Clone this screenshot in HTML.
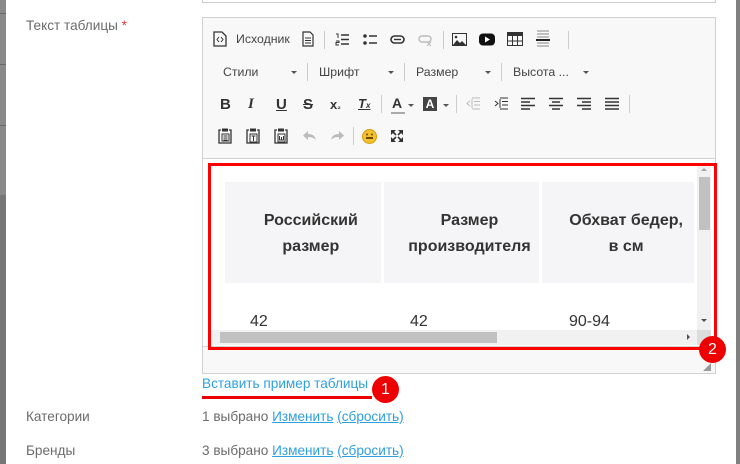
<!DOCTYPE html>
<html><head><meta charset="utf-8"><style>
*{margin:0;padding:0;box-sizing:border-box}
body{width:740px;height:464px;overflow:hidden;background:#fff;font-family:"Liberation Sans","DejaVu Sans",sans-serif;position:relative;color:#555}
.a{position:absolute}
.lbl{font-size:13.6px;color:#6b6b6b}
.tb{font-size:12px;color:#444}
.sep{position:absolute;width:1px;height:18px;background:#ccc}
.arr{position:absolute;width:0;height:0;border-left:3px solid transparent;border-right:3px solid transparent;border-top:3px solid #555}
.ic{position:absolute;font-size:13px;color:#333;font-weight:bold}
th{background:#f5f5f7;font-weight:bold;font-size:16px;color:#333;text-align:center;line-height:26px;padding-left:16px}
a{color:#2e9fe0}
</style></head><body>
<div class="a" style="left:0;top:0;width:6px;height:195px;background:#8a8a8a"></div>
<div class="a" style="left:0;top:195px;width:6px;height:269px;background:#777"></div>
<div class="a" style="left:0;top:13px;width:6px;height:1px;background:#6a6a6a"></div>
<div class="a" style="left:0;top:64px;width:6px;height:1px;background:#6a6a6a"></div>
<div class="a" style="left:0;top:125px;width:6px;height:1px;background:#6a6a6a"></div>
<div class="a" style="left:736px;top:0;width:4px;height:464px;background:#808080"></div>
<div class="a" style="left:202px;top:-5px;width:514px;height:8px;border:1px solid #ccc"></div>

<div class="a lbl" style="left:26px;top:18px">Текст таблицы <span style="color:#e33">*</span></div>
<div class="a lbl" style="left:26px;top:409px">Категории</div>
<div class="a lbl" style="left:26px;top:443px">Бренды</div>

<div class="a" style="left:202px;top:17px;width:514px;height:357px;border:1px solid #d1d1d1;background:#f8f8f8"></div>
<div class="a" style="left:203px;top:158px;width:512px;height:1px;background:#d1d1d1"></div>
<div class="a" style="left:203px;top:159px;width:512px;height:187px;background:#fff"></div>
<div class="a" style="left:203px;top:346px;width:512px;height:1px;background:#d1d1d1"></div>
<div class="a" style="left:703px;top:363px;width:0;height:0;border-left:8px solid transparent;border-bottom:8px solid #999"></div>

<svg class="a" style="left:213px;top:31px" width="14" height="16"><path d="M1 1h8l4 4v10H1z" fill="none" stroke="#333" stroke-width="1.3"/><path d="M6 6l-2 2.5 2 2.5M8 6l2 2.5-2 2.5" stroke="#333" fill="none"/></svg>
<div class="a tb" style="left:236px;top:32px;font-size:12.3px">Исходник</div>
<svg class="a" style="left:302px;top:31px" width="12" height="16"><path d="M1 1h7l3 3v11H1z" fill="none" stroke="#333" stroke-width="1.2"/><path d="M3 7h6M3 9.5h6M3 12h6" stroke="#333"/></svg>
<div class="sep" style="left:324px;top:31px"></div>
<svg class="a" style="left:335px;top:33px" width="14" height="13"><path d="M6 2h8M6 6.5h8M6 11h8" stroke="#333" stroke-width="1.4"/><path d="M1 1h2v4M1 8h3v1.5H1V12h3" stroke="#333" fill="none"/></svg>
<svg class="a" style="left:363px;top:33px" width="14" height="13"><circle cx="2" cy="3" r="1.8" fill="#333"/><circle cx="2" cy="10" r="1.8" fill="#333"/><path d="M6 3h8M6 10h8" stroke="#333" stroke-width="1.6"/></svg>
<svg class="a" style="left:390px;top:35px" width="15" height="9"><rect x="1" y="1" width="13" height="7" rx="3.5" fill="none" stroke="#333" stroke-width="1.6"/><path d="M4 4.5h7" stroke="#333" stroke-width="1.4"/></svg>
<svg class="a" style="left:418px;top:35px" width="15" height="12"><rect x="1" y="1" width="12" height="6" rx="3" fill="none" stroke="#bbb" stroke-width="1.4"/><path d="M9 7l4 4M13 7l-4 4" stroke="#bbb"/></svg>
<div class="sep" style="left:443px;top:31px"></div>
<svg class="a" style="left:452px;top:33px" width="15" height="13"><rect x=".5" y=".5" width="14" height="12" fill="none" stroke="#333"/><path d="M1 12l4-5 3 3 2-2 4 4z" fill="#333"/><circle cx="4" cy="4" r="1.3" fill="#333"/></svg>
<svg class="a" style="left:479px;top:33px" width="16" height="13"><rect x="0" y="0.5" width="16" height="12" rx="4" fill="#111"/><path d="M6 3.5l5 3-5 3z" fill="#fff"/></svg>
<svg class="a" style="left:507px;top:32px" width="16" height="14"><rect x=".5" y=".5" width="15" height="13" fill="none" stroke="#333"/><rect x="0" y="0" width="16" height="4" fill="#333"/><path d="M5.5 4v10M10.5 4v10M0 9h16" stroke="#333"/></svg>
<svg class="a" style="left:536px;top:30px" width="14" height="17"><path d="M1 1h12M1 4h12M1 7h12M1 13h12M1 16h12" stroke="#888"/><path d="M0 10h14" stroke="#222" stroke-width="2"/></svg>
<div class="sep" style="left:568px;top:31px"></div>

<div class="a tb" style="left:223px;top:65px;font-size:12.3px">Стили</div><div class="arr" style="left:291px;top:71px"></div>
<div class="sep" style="left:307px;top:63px"></div>
<div class="a tb" style="left:319px;top:65px;font-size:12.3px">Шрифт</div><div class="arr" style="left:388px;top:71px"></div>
<div class="sep" style="left:404px;top:63px"></div>
<div class="a tb" style="left:416px;top:65px;font-size:12.3px">Размер</div><div class="arr" style="left:485px;top:71px"></div>
<div class="sep" style="left:501px;top:63px"></div>
<div class="a tb" style="left:513px;top:65px;font-size:12.3px">Высота ...</div><div class="arr" style="left:583px;top:71px"></div>

<div class="ic" style="left:220px;top:96px;font-size:15px">B</div>
<div class="ic" style="left:248px;top:96px;font-size:15px;font-style:italic;font-family:'Liberation Serif',serif">I</div>
<div class="ic" style="left:276px;top:96px;font-size:15px;text-decoration:underline">U</div>
<div class="ic" style="left:303px;top:96px;font-size:15px;text-decoration:line-through">S</div>
<div class="ic" style="left:330px;top:97px">x<span style="font-size:8px">₂</span></div>
<div class="ic" style="left:358px;top:96px;font-style:italic;text-decoration:underline">T<span style="font-size:8px">x</span></div>
<div class="sep" style="left:381px;top:95px"></div>
<div class="ic" style="left:392px;top:95px;font-size:14px">A</div><div class="a" style="left:391px;top:112px;width:14px;height:2px;background:#aaa"></div><div class="arr" style="left:408px;top:104px"></div>
<div class="a" style="left:423px;top:97px;width:14px;height:14px;background:#444;color:#fff;font-size:12px;font-weight:bold;text-align:center;line-height:14px">A</div><div class="arr" style="left:443px;top:104px"></div>
<div class="sep" style="left:456px;top:95px"></div>
<svg class="a" style="left:466px;top:97px" width="14" height="13"><path d="M6 1h8M8 4.5h6M8 8h6M6 12h8" stroke="#bbb"/><path d="M4 4L1 6.5 4 9M6 2v9" stroke="#bbb" fill="none"/></svg>
<svg class="a" style="left:494px;top:97px" width="14" height="13"><path d="M6 1h8M8 4.5h6M8 8h6M6 12h8" stroke="#333"/><path d="M1 4l3 2.5L1 9M6 2v9" stroke="#333" fill="none"/></svg>
<svg class="a" style="left:521px;top:97px" width="14" height="13"><path d="M0 1.5h14M0 5h9M0 8.5h14M0 12h9" stroke="#333" stroke-width="1.6"/></svg>
<svg class="a" style="left:549px;top:97px" width="14" height="13"><path d="M0 1.5h14M3 5h8M0 8.5h14M3 12h8" stroke="#333" stroke-width="1.6"/></svg>
<svg class="a" style="left:577px;top:97px" width="14" height="13"><path d="M0 1.5h14M5 5h9M0 8.5h14M5 12h9" stroke="#333" stroke-width="1.6"/></svg>
<svg class="a" style="left:605px;top:97px" width="14" height="13"><path d="M0 1.5h14M0 5h14M0 8.5h14M0 12h14" stroke="#333" stroke-width="1.6"/></svg>
<div class="sep" style="left:629px;top:95px"></div>

<svg class="a" style="left:218px;top:128px" width="14" height="16"><path d="M3 2H1v13h12V2h-2" fill="none" stroke="#333" stroke-width="1.3"/><rect x="4" y="0.5" width="6" height="3" fill="#333"/><path d="M4 6h7v7H4zM5.5 8h4M5.5 10h4M5.5 12h4" fill="none" stroke="#333"/></svg>
<svg class="a" style="left:246px;top:128px" width="14" height="16"><path d="M3 2H1v13h12V2h-2" fill="none" stroke="#333" stroke-width="1.3"/><rect x="4" y="0.5" width="6" height="3" fill="#333"/><path d="M4 6h7v8H4zM5.5 8h4M7.5 8v5" fill="none" stroke="#333"/></svg>
<svg class="a" style="left:274px;top:128px" width="14" height="16"><path d="M3 2H1v13h12V2h-2" fill="none" stroke="#333" stroke-width="1.3"/><rect x="4" y="0.5" width="6" height="3" fill="#333"/><path d="M4 6h7v8H4zM5.5 8v4h4V8M7.5 9v3" fill="none" stroke="#333"/></svg>
<svg class="a" style="left:302px;top:130px" width="15" height="11"><path d="M6 1L1 5.5 6 10V7c4 0 6 1 8 3-1-4-3-6-8-6z" fill="#bbb"/></svg>
<svg class="a" style="left:330px;top:130px" width="15" height="11"><path d="M9 1l5 4.5L9 10V7c-4 0-6 1-8 3 1-4 3-6 8-6z" fill="#bbb"/></svg>
<div class="sep" style="left:353px;top:127px"></div>
<svg class="a" style="left:362px;top:129px" width="15" height="15"><circle cx="7.5" cy="7.5" r="7" fill="#f5c02c" stroke="#d49a10"/><path d="M4 9h7" stroke="#6b4a00" stroke-width="2"/><circle cx="5" cy="5.5" r="1" fill="#6b4a00"/><circle cx="10" cy="5.5" r="1" fill="#6b4a00"/></svg>
<svg class="a" style="left:390px;top:129px" width="14" height="14"><path d="M1 1h5L1 6zM13 1H8l5 5zM1 13h5L1 8zM13 13H8l5-5z" fill="#333"/><path d="M2 2l4 4M12 2L8 6M2 12l4-4M12 12L8 8" stroke="#333" stroke-width="1.6"/></svg>

<div class="a" style="left:203px;top:159px;width:494px;height:171px;overflow:hidden">
<table style="position:absolute;left:19px;top:23px;border-spacing:3px 0">
<tr><th style="width:157px;height:101px;padding-top:3px">Российский<br>размер</th><th style="width:156px;padding-top:3px">Размер<br>производителя</th><th style="width:154px;padding-top:3px">Обхват бедер,<br>в см</th></tr>
</table>
<div class="a" style="left:47px;top:154px;font-size:16px;color:#333">42</div>
<div class="a" style="left:207px;top:154px;font-size:16px;color:#333">42</div>
<div class="a" style="left:366px;top:154px;font-size:16px;color:#333">90-94</div>
</div>
<div class="a" style="left:697px;top:166px;width:14px;height:164px;background:#f1f1f1"></div>
<div class="a" style="left:699px;top:177px;width:11px;height:53px;background:#c1c1c1"></div>
<div class="a" style="left:701px;top:168px;border-left:3px solid transparent;border-right:3px solid transparent;border-bottom:3px solid #a3a3a3"></div>
<div class="a" style="left:701px;top:319px;border-left:3px solid transparent;border-right:3px solid transparent;border-top:3px solid #505050"></div>
<div class="a" style="left:211px;top:330px;width:486px;height:15px;background:#f1f1f1"></div>
<div class="a" style="left:220px;top:332px;width:277px;height:11px;background:#c1c1c1"></div>
<div class="a" style="left:687px;top:334px;border-top:3px solid transparent;border-bottom:3px solid transparent;border-left:3px solid #505050"></div>
<div class="a" style="left:697px;top:330px;width:14px;height:15px;background:#dcdcdc"></div>

<div class="a" style="left:208px;top:163px;width:509px;height:187px;border:3px solid #f00"></div>
<div class="a" style="left:699px;top:336px;width:27px;height:27px;border-radius:50%;background:#e00;color:#fff;font-size:16px;text-align:center;line-height:27px">2</div>

<div class="a" style="left:202px;top:376px;font-size:13.6px;color:#2e9fe0">Вставить пример таблицы</div>
<div class="a" style="left:202px;top:396px;width:170px;height:3px;background:#e00"></div>
<div class="a" style="left:372px;top:376px;width:27px;height:27px;border-radius:50%;background:#e00;color:#fff;font-size:16px;text-align:center;line-height:27px">1</div>

<div class="a lbl" style="left:202px;top:409px">1 выбрано <a style="text-decoration:underline">Изменить</a> <a style="text-decoration:underline">(сбросить)</a></div>
<div class="a lbl" style="left:202px;top:443px">3 выбрано <a style="text-decoration:underline">Изменить</a> <a style="text-decoration:underline">(сбросить)</a></div>
</body></html>
